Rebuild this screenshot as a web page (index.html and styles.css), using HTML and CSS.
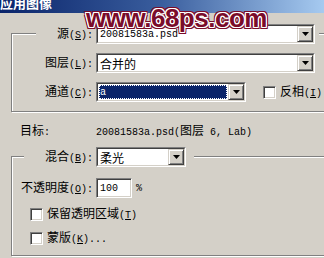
FILE: index.html
```html
<!DOCTYPE html>
<html>
<head>
<meta charset="utf-8">
<link rel="stylesheet" href="styles.css">
</head>
<body>
<div class="titlebar"><span class="title">应用图像</span></div>
<div class="wm">www.68ps.com</div>
<div class="main">
  <div class="group g1">
    <div class="legend lg1">
      <span class="lbl">源<span class="mono">(<u>S</u>):</span></span>
      <div class="sel w219"><div class="sel-in">
        <div class="field"><span class="mono">20081583a.psd</span></div>
        <div class="btn"><svg width="7" height="4" viewBox="0 0 7 4"><polygon points="0,0 7,0 3.5,4" fill="#000"/></svg></div>
      </div></div>
    </div>
    <div class="row r-in">
      <span class="lbl">图层<span class="mono">(<u>L</u>):</span></span>
      <div class="sel w219"><div class="sel-in">
        <div class="field"><span>合并的</span></div>
        <div class="btn"><svg width="7" height="4" viewBox="0 0 7 4"><polygon points="0,0 7,0 3.5,4" fill="#000"/></svg></div>
      </div></div>
    </div>
    <div class="row r-in">
      <span class="lbl">通道<span class="mono">(<u>C</u>):</span></span>
      <div class="sel w150"><div class="sel-in">
        <div class="field hl"><span class="mono">a</span></div>
        <div class="btn"><svg width="7" height="4" viewBox="0 0 7 4"><polygon points="0,0 7,0 3.5,4" fill="#000"/></svg></div>
      </div></div>
      <span class="cb cb-inv"></span>
      <span class="cblbl">反相<span class="mono">(<u>I</u>)</span></span>
    </div>
  </div>
  <div class="target">
    <span class="tlbl">目标<span class="mono">:</span></span>
    <span class="mono">20081583a.psd(<span class="cjk">图层</span> 6, Lab)</span>
  </div>
  <div class="group g2">
    <div class="legend lg2">
      <span class="lbl">混合<span class="mono">(<u>B</u>):</span></span>
      <div class="sel w90"><div class="sel-in">
        <div class="field"><span>柔光</span></div>
        <div class="btn"><svg width="7" height="4" viewBox="0 0 7 4"><polygon points="0,0 7,0 3.5,4" fill="#000"/></svg></div>
      </div></div>
    </div>
    <div class="row r-op">
      <span class="lbl lbl-op">不透明度<span class="mono">(<u>O</u>):</span></span>
      <div class="inp"><span class="mono">100</span></div>
      <span class="pct mono">%</span>
    </div>
    <div class="crow">
      <span class="cb"></span>
      <span class="cblbl">保留透明区域<span class="mono">(<u>T</u>)</span></span>
    </div>
    <div class="crow">
      <span class="cb"></span>
      <span class="cblbl">蒙版<span class="mono">(<u>K</u>)...</span></span>
    </div>
  </div>
</div>
</body>
</html>
```
FILE: styles.css
```css
* { box-sizing: border-box; }
html, body { margin: 0; padding: 0; }
body {
  width: 324px;
  height: 258px;
  overflow: hidden;
  position: relative;
  background: #d4d0c8;
  font-family: "Noto Sans CJK SC", sans-serif;
  font-size: 12px;
  color: #000;
}
.mono { font-family: "Liberation Mono", monospace; font-size: 10px; }
.cjk { font-family: "Noto Sans CJK SC", sans-serif; font-size: 12px; }
u { text-decoration: underline; text-underline-offset: 1px; }

.titlebar {
  height: 13px;
  background: linear-gradient(to right, #0a246a 0%, #3a5e9e 50%, #a6caf0 100%);
  overflow: hidden;
}
.title {
  display: block;
  color: #fff;
  font-weight: bold;
  font-size: 13px;
  line-height: 13px;
  margin-top: -4px;
  padding-left: 0;
}

.wm {
  position: absolute;
  left: 86px;
  top: 4px;
  font-family: "Liberation Sans", Arial, sans-serif;
  font-weight: bold;
  font-size: 26px;
  line-height: 28px;
  letter-spacing: -0.5px;
  color: #7a0c2a;
  text-shadow:
    1px 0 0 #fff, -1px 0 0 #fff, 0 1px 0 #fff, 0 -1px 0 #fff,
    1px 1px 0 #fff, -1px -1px 0 #fff, 1px -1px 0 #fff, -1px 1px 0 #fff,
    2px 0 0 #7a0c2a, -2px 0 0 #7a0c2a, 0 2px 0 #7a0c2a, 0 -2px 0 #7a0c2a,
    2px 2px 0 #7a0c2a, -2px -2px 0 #7a0c2a, 2px -2px 0 #7a0c2a, -2px 2px 0 #7a0c2a;
}

.main { padding: 20px 0 0 11px; }

.group {
  width: 330px;
  border: 1px solid #808080;
  box-shadow: inset 1px 1px 0 #fff, 1px 1px 0 #fff;
}
.g1 { padding-bottom: 9px; }
.g2 { margin-top: 19px; padding-bottom: 9px; }

.legend {
  display: flex;
  align-items: center;
  width: max-content;
  height: 20px;
  margin-top: -10px;
  background: #d4d0c8;
}
.lg1 { margin-left: 24px; padding-right: 4px; }
.lg2 { margin-left: 12px; padding-left: 12px; padding-right: 8px; }

.lbl {
  width: 57px;
  text-align: right;
  white-space: nowrap;
  margin-right: 3px;
  line-height: 16px;
}
.lbl-op { width: 73px; }

.row {
  display: flex;
  align-items: center;
  height: 20px;
  margin-top: 9px;
}
.r-in { margin-left: 24px; }
.r-op { margin-left: 8px; margin-top: 11px; }

.sel {
  display: flex;
  height: 20px;
  background: #fff;
  border: 1px solid;
  border-color: #808080 #fff #fff #808080;
}
.w219 { width: 219px; }
.w150 { width: 150px; }
.w90 { width: 90px; }
.sel-in {
  flex: 1;
  display: flex;
  border: 1px solid;
  border-color: #404040 #d4d0c8 #d4d0c8 #404040;
}
.field {
  flex: 1;
  display: flex;
  align-items: center;
  padding-left: 2px;
  white-space: nowrap;
  overflow: hidden;
}
.field.hl {
  margin: 1px;
  padding-left: 1px;
  background: #0a246a;
  color: #fff;
  outline: 1px dotted #fff;
  outline-offset: -1px;
}
.btn {
  width: 16px;
  background: #d4d0c8;
  border: 1px solid;
  border-color: #d4d0c8 #404040 #404040 #d4d0c8;
  box-shadow: inset 1px 1px 0 #fff, inset -1px -1px 0 #808080;
  display: flex;
  align-items: center;
  justify-content: center;
}
.btn svg { display: block; }

.cb {
  display: block;
  width: 13px;
  height: 13px;
  flex: none;
  background: #fff;
  border: 1px solid;
  border-color: #808080 #fff #fff #808080;
  box-shadow: inset 1px 1px 0 #404040, inset -1px -1px 0 #d4d0c8;
}
.cb-inv { margin-left: 17px; }
.cblbl { margin-left: 4px; white-space: nowrap; line-height: 16px; }

.target {
  display: flex;
  align-items: center;
  height: 16px;
  margin-top: 9px;
  padding-left: 9px;
  white-space: nowrap;
}
.tlbl { width: 76px; }

.inp {
  width: 36px;
  height: 20px;
  display: flex;
  align-items: center;
  padding-left: 3px;
  background: #fff;
  border: 1px solid;
  border-color: #808080 #fff #fff #808080;
  box-shadow: inset 1px 1px 0 #404040, inset -1px -1px 0 #d4d0c8;
}
.pct { margin-left: 4px; }

.crow {
  display: flex;
  align-items: center;
  height: 16px;
  margin-top: 8px;
  margin-left: 18px;
}
```
